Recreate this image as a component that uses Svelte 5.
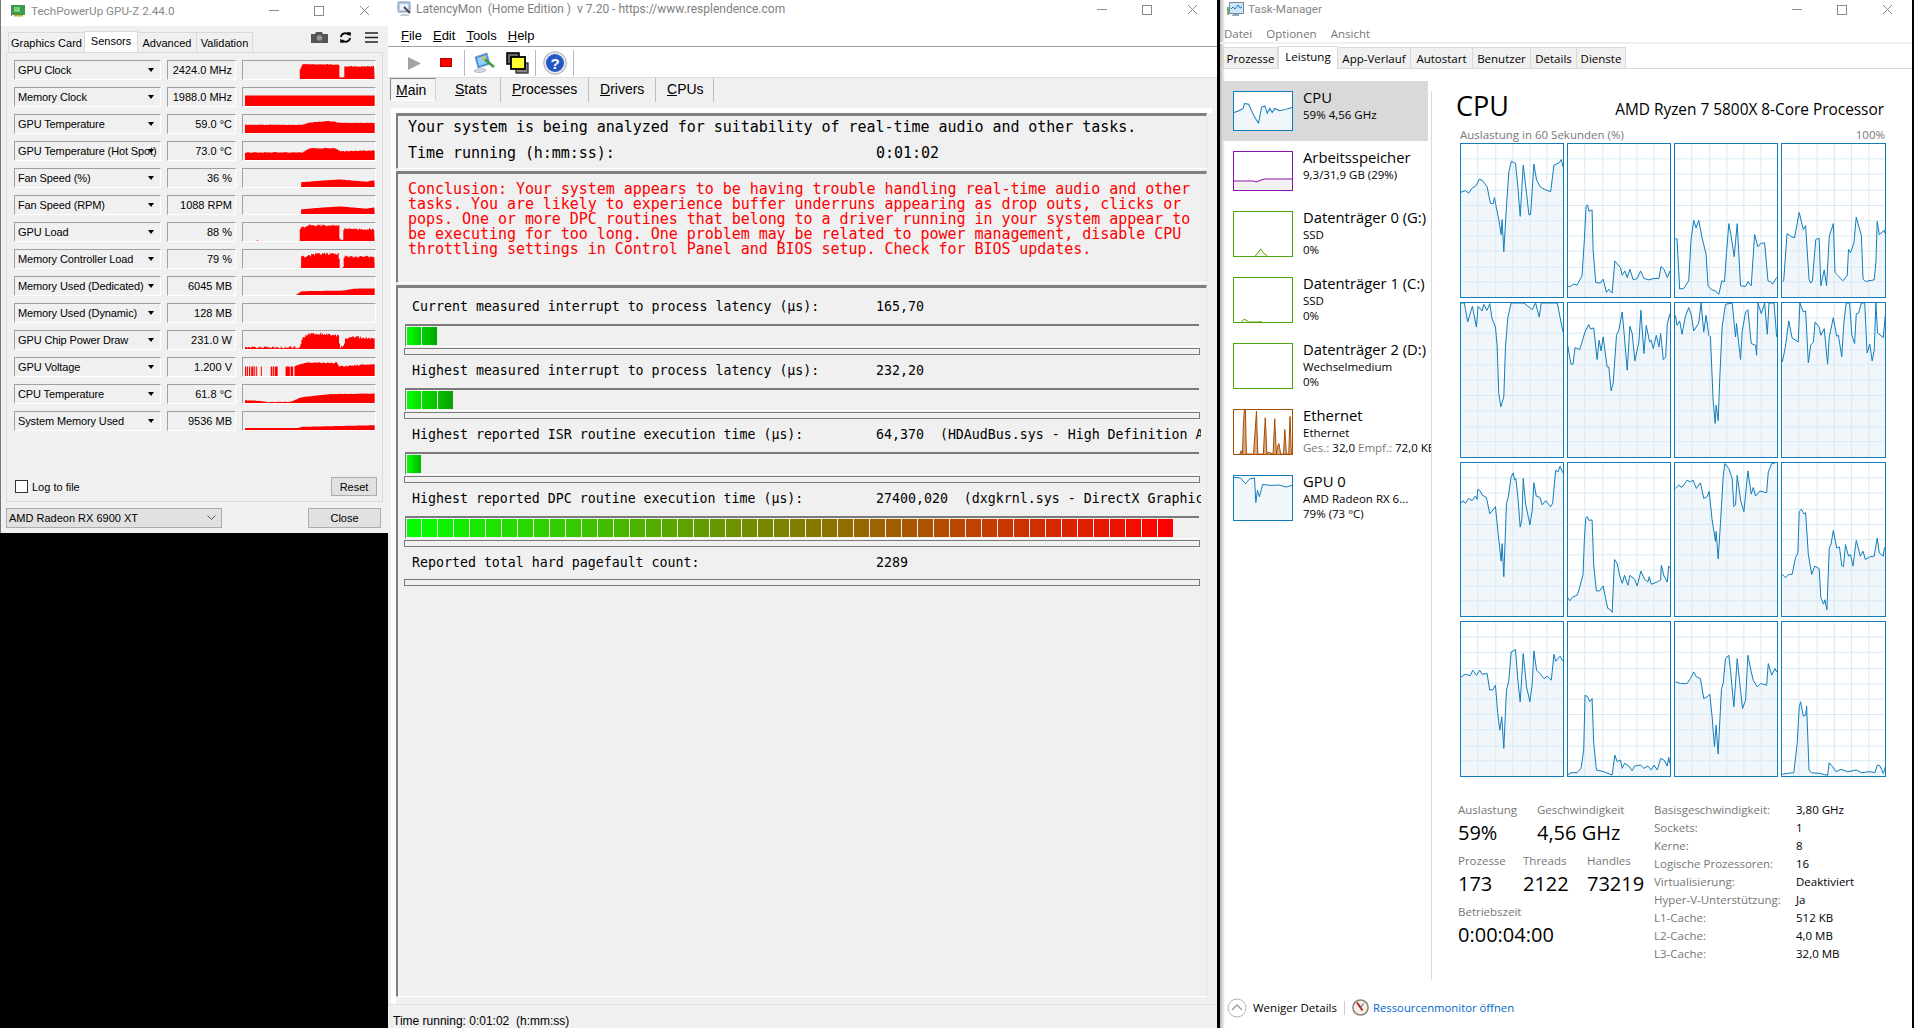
<script>
  const jitter = (i, seed) => {
    const v = Math.sin(i * 12.9898 + seed * 78.233) * 43758.5453;
    return v - Math.floor(v) - 0.5;
  };

  // Builds a stepped area for a GPU-Z sensor graph. Coordinates are in a 400x57 box.
  function area(spec, j, seed) {
    if (!spec.length) return '';
    const pts = [];
    const x0 = spec[0][0];
    pts.push(`${x0},57`);
    let k = 0;
    for (let x = x0; x <= spec[spec.length - 1][0]; x += 3) {
      while (k < spec.length - 2 && x > spec[k + 1][0]) k++;
      const [ax, ah] = spec[k];
      const [bx, bh] = spec[k + 1];
      const t = Math.min(1, (x - ax) / (bx - ax || 1));
      const h = Math.max(0, Math.min(57, ah + (bh - ah) * t + jitter(x, seed) * j));
      pts.push(`${x},${57 - h}`, `${x + 3},${57 - h}`);
    }
    pts.push(`${spec[spec.length - 1][0] + 3},57`);
    return pts.join(' ');
  }

  const sensors = [
    { n: 'GPU Clock', v: '2424.0 MHz', s: [[898, 32], [905, 47], [1015, 46], [1018, 6], [1030, 6], [1033, 40], [1122, 40]], j: 3 },
    { n: 'Memory Clock', v: '1988.0 MHz', s: [[732, 33], [1122, 33]], j: 0 },
    { n: 'GPU Temperature', v: '59.0 °C', s: [[732, 26], [905, 26], [925, 33], [985, 38], [1020, 32], [1122, 32]], j: 1.5 },
    { n: 'GPU Temperature (Hot Spot)', v: '73.0 °C', s: [[732, 24], [905, 24], [925, 37], [1000, 38], [1020, 28], [1122, 30]], j: 2.5 },
    { n: 'Fan Speed (%)', v: '36 %', s: [[902, 15], [960, 20], [1020, 24], [1060, 20], [1100, 17], [1122, 21]], j: 0.6 },
    { n: 'Fan Speed (RPM)', v: '1088 RPM', s: [[902, 15], [960, 20], [1020, 24], [1060, 20], [1100, 17], [1122, 21]], j: 0.6 },
    { n: 'GPU Load', v: '88 %', s: [[898, 40], [925, 50], [1015, 48], [1018, 6], [1028, 6], [1030, 38], [1122, 38]], j: 6, dot: 768 },
    { n: 'Memory Controller Load', v: '79 %', s: [[902, 34], [950, 45], [1015, 45], [1018, 0], [1028, 0], [1030, 35], [1122, 35]], j: 7 },
    { n: 'Memory Used (Dedicated)', v: '6045 MB', s: [[888, 2], [902, 12], [1030, 14], [1060, 20], [1122, 21]], j: 0 },
    { n: 'Memory Used (Dynamic)', v: '128 MB', s: [], j: 0 },
    { n: 'GPU Chip Power Draw', v: '231.0 W', s: [[732, 5], [898, 5], [905, 36], [925, 48], [960, 48], [1015, 42], [1018, 5], [1030, 8], [1035, 30], [1060, 38], [1122, 33]], j: 7 },
    { n: 'GPU Voltage', v: '1.200 V', s: [[882, 32], [910, 42], [1010, 42], [1015, 30], [1122, 38]], j: 3.5,
      bars: [[732, 3], [737, 4], [744, 4], [751, 7], [760, 3], [766, 3], [780, 3], [810, 5], [817, 3], [822, 9], [855, 13], [870, 8]] },
    { n: 'CPU Temperature', v: '61.8 °C', s: [[732, 8], [760, 8], [800, 3], [870, 4], [900, 18], [950, 24], [990, 28], [1122, 30]], j: 1.2 },
    { n: 'System Memory Used', v: '9536 MB', s: [[732, 6], [888, 6], [905, 10], [1030, 13], [1122, 15]], j: 0 }
  ].map((r, i) => ({ ...r, poly: area(r.s, r.j, i + 1) }));

  const conclusion = [
    'Conclusion: Your system appears to be having trouble handling real-time audio and other',
    'tasks. You are likely to experience buffer underruns appearing as drop outs, clicks or',
    'pops. One or more DPC routines that belong to a driver running in your system appear to',
    'be executing for too long. One problem may be related to power management, disable CPU',
    'throttling settings in Control Panel and BIOS setup. Check for BIOS updates.'
  ];

  const lerp = (a, b, t) => Math.round(a + (b - a) * t);
  function segs(n, from, to) {
    const out = [];
    for (let i = 0; i < n; i++) {
      const a = i / n, b = (i + 1) / n;
      const c1 = from.map((v, k) => lerp(v, to[k], a));
      const c2 = from.map((v, k) => lerp(v, to[k], b));
      out.push(`linear-gradient(90deg, rgb(${c1}), rgb(${c2}))`);
    }
    return out;
  }

  const rows = [
    { l: 'Current measured interrupt to process latency (µs):', v: '165,70', seg: segs(2, [0, 255, 0], [0, 165, 0]) },
    { l: 'Highest measured interrupt to process latency (µs):', v: '232,20', seg: segs(3, [0, 255, 0], [10, 160, 0]) },
    { l: 'Highest reported ISR routine execution time (µs):', v: '64,370  (HDAudBus.sys - High Definition A', seg: segs(1, [0, 255, 0], [0, 185, 0]) },
    { l: 'Highest reported DPC routine execution time (µs):', v: '27400,020  (dxgkrnl.sys - DirectX Graphic', seg: segs(48, [0, 255, 0], [255, 0, 0]) },
    { l: 'Reported total hard pagefault count:', v: '2289', seg: null }
  ];

  const tmTabs = ['Prozesse', 'Leistung', 'App-Verlauf', 'Autostart', 'Benutzer', 'Details', 'Dienste'];

  const side = [
    { n: 'CPU', sub: ['59%  4,56 GHz'], col: 'blue', vb: '40 274 178 118', h: 40, sel: true,
      p: '40,338 55,332 68,325 72,310 85,312 95,335 105,355 115,370 125,320 135,318 142,340 150,325 157,338 165,325 180,332 200,328 218,322', base: 392 },
    { n: 'Arbeitsspeicher', sub: ['9,3/31,9 GB (29%)'], col: 'purple', vb: '40 454 178 118', h: 40,
      p: '40,544 100,544 108,547 125,540 135,538 218,538', base: 572 },
    { n: 'Datenträger 0 (G:)', sub: ['SSD', '0%'], col: 'green', vb: '40 634 178 136', h: 45,
      p: '105,770 112,762 122,748 130,760 140,768 142,770', base: 770 },
    { n: 'Datenträger 1 (C:)', sub: ['SSD', '0%'], col: 'green', vb: '40 -39 178 136', h: 45,
      p: '62,97 70,89 80,92 84,97 120,97 122,94 124,97', base: 97 },
    { n: 'Datenträger 2 (D:)', sub: ['Wechselmedium', '0%'], col: 'green', vb: '40 358 178 136', h: 45, p: '', base: 494 },
    { n: 'Ethernet', sub: ['Ethernet'], eth: true, col: 'orange', vb: '40 358 178 136', h: 45,
      p: '58,494 62,484 66,494 69,400 72,358 75,358 78,494 100,494 105,420 109,362 113,494 130,494 136,382 141,494 145,488 160,494 165,385 170,494 174,470 178,462 183,494 192,494 196,418 201,494 208,494 212,378 216,494', base: 494 },
    { n: 'GPU 0', sub: ['AMD Radeon RX 6...', '79%  (73 °C)'], col: 'blue', vb: '40 556 178 136', h: 45,
      p: '40,560 60,562 75,580 88,565 103,562 107,638 112,600 118,620 128,582 150,585 180,584 200,590 218,585', base: 692 }
  ];

  const vx = [51, 105, 156, 207, 258];
  const hy = [46, 92, 141, 187, 233, 279, 325, 374, 418];

  // Polylines in the 3x coordinates of the crops: [left, top, text of points]
  const cores = [
    [61, 430, '62,577 75,572 85,580 95,565 108,556 116,538 125,540 140,560 150,610 158,612 162,593 168,625 175,660 182,705 185,660 190,757 198,620 205,515 213,483 225,490 232,560 239,650 248,495 258,580 265,645 270,645 280,492 288,540 300,562 315,570 330,575 340,495 355,488 362,478 367,500'],
    [382, 430, '382,860 388,863 400,855 410,858 425,830 432,720 437,620 441,615 446,635 455,630 458,750 466,850 480,852 488,840 498,880 505,870 515,882 523,785 540,805 545,828 553,815 560,835 568,810 578,842 590,838 600,815 610,838 625,842 640,838 655,838 661,802 670,810 680,835 688,815'],
    [703, 430, '705,718 710,718 718,870 730,868 745,845 752,720 760,662 767,685 775,662 785,715 797,765 803,862 815,872 825,876 835,886 844,845 852,848 858,760 865,672 872,710 881,772 890,672 900,860 915,862 922,848 932,860 942,705 952,742 960,732 972,730 982,845 990,848 996,855 1008,835'],
    [1024, 430, '1026,848 1030,845 1040,702 1050,710 1062,715 1076,638 1088,690 1095,678 1105,840 1110,852 1115,845 1125,720 1135,716 1140,860 1150,812 1157,860 1165,710 1177,672 1182,820 1190,828 1205,845 1218,830 1222,750 1228,760 1238,730 1245,652 1260,708 1265,840 1272,847 1298,842 1303,790 1307,665 1313,705 1328,692 1333,710'],

    [61, 37, '62,38 72,38 82,95 96,48 108,110 113,48 125,62 130,42 140,60 148,40 155,85 165,110 170,165 175,310 181,350 190,320 195,170 202,82 212,38 250,38 275,58 285,38 296,80 302,38 350,38 358,80 367,125'],
    [382, 37, '382,165 392,222 398,222 404,172 418,178 428,145 435,122 445,103 450,116 460,113 470,208 476,150 482,182 488,140 500,230 505,230 512,302 518,280 528,135 535,120 545,65 550,120 560,240 568,108 575,130 583,212 595,155 601,60 610,190 617,105 627,155 632,150 638,175 647,135 655,170 660,130 668,208 675,200 680,100 688,70'],
    [703, 37, '705,75 710,105 718,92 725,132 735,78 745,52 752,70 760,122 775,98 782,38 790,125 797,75 805,135 810,140 818,330 824,400 827,345 833,392 838,260 845,110 855,42 875,38 885,140 888,100 900,208 905,122 915,65 922,58 932,160 945,165 948,195 952,38 962,70 972,38 980,132 985,38 1000,38 1008,140'],
    [1024, 37, '1026,215 1035,170 1045,92 1055,143 1073,155 1078,38 1088,65 1095,62 1103,218 1110,165 1118,155 1123,95 1135,110 1140,135 1150,115 1160,222 1165,140 1177,82 1187,138 1192,135 1202,200 1208,100 1215,38 1225,38 1232,135 1240,160 1245,70 1252,68 1260,38 1270,38 1277,188 1285,162 1292,212 1298,180 1303,38 1308,128 1325,142 1333,50'],

    [61, 517, '62,640 68,632 75,640 85,625 95,632 105,618 110,628 112,598 120,603 125,615 138,622 148,672 158,660 165,650 173,730 182,815 185,762 190,862 198,640 203,622 212,560 218,548 222,570 226,565 232,620 239,712 244,690 248,565 255,640 268,705 275,660 280,578 287,618 298,622 305,645 315,632 330,650 336,640 345,540 352,545 358,528 367,548'],
    [382, 517, '382,925 388,935 395,925 410,918 415,905 428,855 432,750 436,685 440,680 446,692 455,690 460,830 468,905 478,905 488,890 495,925 502,958 510,962 515,970 522,810 530,822 538,860 545,882 552,858 562,888 568,858 582,870 590,890 601,845 612,870 622,878 626,862 632,885 650,878 660,872 662,828 670,860 680,878 684,830 688,835'],
    [703, 517, '705,595 715,585 725,592 740,570 750,575 758,570 768,595 780,578 790,625 800,620 806,604 815,690 825,755 827,725 833,808 840,700 848,560 853,520 865,535 875,565 880,650 885,645 890,555 900,630 910,665 922,542 932,612 938,592 945,618 958,603 978,608 983,545 993,520 1008,516'],
    [1024, 517, '1026,855 1035,865 1045,855 1055,855 1065,805 1072,790 1076,665 1082,658 1090,672 1095,668 1103,795 1113,855 1122,830 1135,838 1140,925 1148,945 1152,932 1158,962 1165,775 1170,765 1177,722 1187,775 1195,772 1202,828 1207,832 1213,765 1222,800 1228,795 1235,830 1245,752 1257,800 1265,785 1272,810 1285,802 1298,800 1307,745 1313,790 1325,800 1328,775 1333,775'],

    [61, 64, '62,230 75,222 90,226 97,210 108,225 118,210 125,222 140,220 148,270 158,268 165,255 172,340 178,390 184,350 190,445 198,270 205,240 212,155 225,148 232,240 239,305 248,160 258,260 268,305 275,250 280,152 288,210 300,222 310,235 320,228 332,240 340,162 345,183 358,168 367,182'],
    [382, 64, '382,525 392,518 410,518 422,505 430,450 434,285 442,290 448,305 455,295 460,430 468,510 490,515 515,525 523,465 530,485 540,480 545,505 552,490 565,498 575,512 582,498 600,495 610,505 622,498 632,510 640,495 650,510 660,475 670,480 680,498 684,472 688,490'],
    [703, 64, '705,245 720,250 740,250 750,235 760,215 768,230 780,235 790,295 800,290 808,282 815,350 822,440 827,375 833,462 843,265 848,250 855,175 865,165 870,210 880,320 890,175 900,270 906,325 915,300 922,165 932,215 938,240 950,260 960,250 978,255 983,190 993,225 1003,205 1008,215'],
    [1024, 64, '1026,523 1040,520 1060,518 1070,430 1076,320 1080,305 1088,348 1095,345 1098,318 1105,510 1112,518 1135,520 1160,526 1165,488 1175,500 1185,515 1200,508 1220,515 1245,510 1260,518 1285,515 1300,518 1307,495 1315,497 1325,520 1333,495']
  ].map(([x, y, pts]) => {
    const first = pts.split(' ')[0].split(',')[0];
    const last = pts.split(' ').pop().split(',')[0];
    return { x, y, pts, fill: `${first},${y + 465} ${pts} ${last},${y + 465}` };
  });

  const specs = [
    ['Basisgeschwindigkeit:', '3,80 GHz'], ['Sockets:', '1'], ['Kerne:', '8'],
    ['Logische Prozessoren:', '16'], ['Virtualisierung:', 'Deaktiviert'], ['Hyper-V-Unterstützung:', 'Ja'],
    ['L1-Cache:', '512 KB'], ['L2-Cache:', '4,0 MB'], ['L3-Cache:', '32,0 MB']
  ];
</script>

{#snippet controls()}
  <div class="controls">
    <svg width="101" height="11" viewBox="0 0 101 11">
      <path d="M0 5.5h10" class="ctl" />
      <rect x="45.5" y="1.5" width="9" height="9" class="ctl" />
      <path d="M91 1l9 9M100 1l-9 9" class="ctl" />
    </svg>
  </div>
{/snippet}

<div class="desktop">
  <!-- GPU-Z -->
  <section class="gz">
    <header class="gz-title">
      <svg class="gz-ico" width="15" height="13" viewBox="0 0 15 13">
        <rect x="1" y="1" width="13" height="10" fill="#3c9a4a" />
        <rect x="3" y="3" width="6" height="5" fill="#7ad07a" />
        <rect x="0" y="1" width="1" height="11" fill="#777" />
        <rect x="3" y="11" width="9" height="1.5" fill="#c8a93a" />
      </svg>
      <span class="gz-name">TechPowerUp GPU-Z 2.44.0</span>
      {@render controls()}
    </header>
    <div class="gz-tabs">
      <span class="gz-tab w77">Graphics Card</span>
      <span class="gz-tab gz-on w53">Sensors</span>
      <span class="gz-tab w59">Advanced</span>
      <span class="gz-tab w56">Validation</span>
      <div class="gz-tools">
        <svg width="17" height="11" viewBox="0 0 17 11">
          <path d="M0 2h4l1-2h6l1 2h5v9H0z" fill="#555" />
          <circle cx="8.5" cy="6" r="2.7" fill="#999" />
        </svg>
        <svg width="13" height="11" viewBox="0 0 13 11" fill="none" stroke="#000" stroke-width="1.8">
          <path d="M2 5a4.4 4 0 0 1 8-2" />
          <path d="M11 6a4.4 4 0 0 1-8 2" />
          <path d="M8 0l4 .5-.5 4zM5 11l-4-.5.5-4z" fill="#000" stroke="none" />
        </svg>
        <svg width="13" height="11" viewBox="0 0 13 11">
          <path d="M0 1h13M0 5.5h13M0 10h13" stroke="#222" stroke-width="1.7" />
        </svg>
      </div>
    </div>
    <div class="gz-panel">
      <div class="gz-rows">
        {#each sensors as r}
          <div class="sunk gz-label">
            <span>{r.n}</span>
            <i class="arrow"></i>
          </div>
          <div class="sunk gz-val">{r.v}</div>
          <div class="sunk gz-graph">
            <svg viewBox="726 0 400 57" preserveAspectRatio="none" width="132" height="18">
              {#if r.poly}<polygon points={r.poly} fill="#ff0000" />{/if}
              {#if r.bars}{#each r.bars as b}<rect x={b[0]} y="27" width={b[1]} height="30" fill="#ff0000" />{/each}{/if}
              {#if r.dot}<rect x={r.dot} y="54" width="3" height="3" fill="#ff0000" />{/if}
            </svg>
          </div>
        {/each}
      </div>
      <div class="gz-foot">
        <label class="gz-check"><i class="box"></i>Log to file</label>
        <span class="btn reset">Reset</span>
      </div>
    </div>
    <div class="gz-bottom">
      <div class="combo">
        <span>AMD Radeon RX 6900 XT</span>
        <svg width="9" height="6" viewBox="0 0 9 6"><path d="M.5 .5l4 4 4-4" fill="none" stroke="#555" /></svg>
      </div>
      <span class="btn close">Close</span>
    </div>
  </section>

  <!-- LatencyMon -->
  <section class="lm">
    <header class="lm-title">
      <svg width="16" height="16" viewBox="0 0 16 16">
        <rect x="1" y="1" width="12" height="10" rx="1" fill="#b9cfe9" stroke="#7f93ad" />
        <rect x="3" y="3" width="8" height="6" fill="#eaf2fb" />
        <path d="M4 13h8v2H3z" fill="#c8ced6" />
        <path d="M7 6l6 6" stroke="#444" stroke-width="2" />
      </svg>
      <span class="lm-name">LatencyMon&nbsp; (Home Edition )&nbsp; v 7.20 - https://www.resplendence.com</span>
      {@render controls()}
    </header>
    <nav class="lm-menu">
      <span><u>F</u>ile</span><span><u>E</u>dit</span><span><u>T</u>ools</span><span><u>H</u>elp</span>
    </nav>
    <div class="lm-tools">
      <svg class="t-play" width="13" height="13" viewBox="0 0 13 13"><path d="M0 0l13 6.5L0 13z" fill="#a3a3a3" /></svg>
      <i class="t-stop"></i>
      <i class="t-sep sep1"></i>
      <svg class="t-mon" width="24" height="22" viewBox="0 0 24 22">
        <path d="M2 5l12-4 3 11-12 4z" fill="#3f80d8" stroke="#8aa6c9" />
        <path d="M4 6l9-3 2 8-9 3z" fill="#8fd0ff" />
        <path d="M1 19c3-3 10-3 12-1 1 2-10 4-12 1z" fill="#d5d8de" stroke="#9aa2ad" stroke-width=".6" />
        <path d="M9 5l12 10" stroke="#3c9a3c" stroke-width="2.4" />
        <path d="M9 5l3 2.4" stroke="#e8c23a" stroke-width="2.6" />
      </svg>
      <svg class="t-win" width="23" height="22" viewBox="0 0 23 22">
        <rect x="1" y="1" width="12" height="11" fill="#666" stroke="#000" stroke-width="1.6" />
        <rect x="10" y="11" width="12" height="10" fill="#888" stroke="#333" stroke-width="1.4" />
        <rect x="5" y="5" width="14" height="12" fill="#ffff33" stroke="#000" stroke-width="1.8" />
      </svg>
      <i class="t-sep sep2"></i>
      <svg class="t-help" width="24" height="24" viewBox="0 0 24 24">
        <circle cx="12" cy="12" r="11.3" fill="#e5e8ee" stroke="#a8adb5" />
        <circle cx="12" cy="12" r="9" fill="#2458c4" />
        <text x="12" y="17.5" text-anchor="middle" class="help-q">?</text>
      </svg>
      <i class="t-sep sep3"></i>
    </div>
    <div class="lm-tabs">
      <span class="lm-tab lm-on"><u>M</u>ain</span>
      <span class="lm-tab w57"><u>S</u>tats</span>
      <span class="lm-tab w88"><u>P</u>rocesses</span>
      <span class="lm-tab w67"><u>D</u>rivers</span>
      <span class="lm-tab w58"><u>C</u>PUs</span>
    </div>
    <div class="lm-body">
      <div class="stage">
        <div class="panel p1">
          <div class="big">Your system is being analyzed for suitability of real-time audio and other tasks.</div>
          <div class="big time"><span class="time-l">Time running (h:mm:ss):</span><span>0:01:02</span></div>
        </div>
        <div class="panel p2">
          {#each conclusion as line}<div class="red">{line}</div>{/each}
        </div>
        <div class="panel p3">
          {#each rows as r}
            <div class="row">
              <div class="rtext"><span class="rlabel">{r.l}</span><span class="rval">{r.v}</span></div>
              {#if r.seg}
                <div class="bar">
                  {#each r.seg as g}<i class="seg" style:background={g}></i>{/each}
                </div>
              {/if}
              <div class="thin" class:nobar={!r.seg}></div>
            </div>
          {/each}
        </div>
      </div>
    </div>
    <footer class="lm-status">Time running: 0:01:02&nbsp; (h:mm:ss)</footer>
  </section>

  <!-- Task-Manager -->
  <section class="tm">
    <header class="tm-title">
      <svg width="17" height="15" viewBox="0 0 17 15">
        <rect x="2.5" y=".5" width="14" height="11" fill="#cfe6f7" stroke="#6f8aa0" />
        <path d="M4 7l2-2 2 2 3-4 2 3 2-1" fill="none" stroke="#1f78c1" />
        <path d="M0 5h2v8H0z" fill="#6db36d" />
        <path d="M6 12h6v2H5z" fill="#9aa5ae" />
      </svg>
      <span class="tm-name">Task-Manager</span>
      {@render controls()}
    </header>
    <nav class="tm-menu"><span>Datei</span><span>Optionen</span><span>Ansicht</span></nav>
    <div class="tm-tabs">
      {#each tmTabs as t, i}<span class="tm-tab t{i}" class:tm-on={i === 1}>{t}</span>{/each}
    </div>
    <div class="tm-body">
      <aside class="tm-side">
        {#each side as s}
          <div class="item" class:sel={s.sel} class:tall={s.h === 45}>
            <div class="thumb {s.col}" class:tallth={s.h === 45}>
              {#if s.p}
                <svg viewBox={s.vb} preserveAspectRatio="none">
                  <polygon points="{s.p.split(' ')[0].split(',')[0]},{s.base} {s.p} {s.p.split(' ').pop().split(',')[0]},{s.base}" class="tf" />
                  <polyline points={s.p} class="tl" />
                </svg>
              {/if}
            </div>
            <div class="itxt">
              <div class="iname">{s.n}</div>
              {#each s.sub as x}<div class="isub">{x}</div>{/each}
              {#if s.eth}<div class="isub nowrap"><span class="grey">Ges.:</span> 32,0 <span class="grey">Empf.:</span> 72,0 KB</div>{/if}
            </div>
          </div>
        {/each}
      </aside>
      <main class="tm-main">
        <div class="m-head"><span class="m-cpu">CPU</span><span class="m-model">AMD Ryzen 7 5800X 8-Core Processor</span></div>
        <div class="m-sub"><span>Auslastung in 60 Sekunden (%)</span><span>100%</span></div>
        <div class="cores">
          {#each cores as c}
            <div class="core">
              <svg viewBox="{c.x + 1} {c.y + 1} 305 463" preserveAspectRatio="none">
                <polygon points={c.fill} class="cf" />
                {#each vx as v}<line x1={c.x + v} x2={c.x + v} y1={c.y} y2={c.y + 465} class="cg" />{/each}
                {#each hy as h}<line x1={c.x} x2={c.x + 307} y1={c.y + h} y2={c.y + h} class="cg" />{/each}
                <polyline points={c.pts} class="cl" />
              </svg>
            </div>
          {/each}
        </div>
        <div class="stats">
          <div class="s-left">
            <div class="s-line gap0">
              <div class="st w79"><div class="sl">Auslastung</div><div class="sv">59%</div></div>
              <div class="st"><div class="sl">Geschwindigkeit</div><div class="sv">4,56 GHz</div></div>
            </div>
            <div class="s-line">
              <div class="st w65"><div class="sl">Prozesse</div><div class="sv">173</div></div>
              <div class="st w64"><div class="sl">Threads</div><div class="sv">2122</div></div>
              <div class="st"><div class="sl">Handles</div><div class="sv">73219</div></div>
            </div>
            <div class="s-line">
              <div class="st"><div class="sl">Betriebszeit</div><div class="sv">0:00:04:00</div></div>
            </div>
          </div>
          <div class="s-right">
            {#each specs as sp}<span class="sk">{sp[0]}</span><span class="sx">{sp[1]}</span>{/each}
          </div>
        </div>
      </main>
    </div>
    <footer class="tm-foot">
      <svg width="20" height="20" viewBox="0 0 20 20" fill="none" stroke="#9a9a9a">
        <circle cx="10" cy="10" r="9" stroke="#b5b5b5" />
        <path d="M5 12l5-5 5 5" stroke-width="1.3" />
      </svg>
      <span class="less">Weniger Details</span>
      <i class="f-sep"></i>
      <svg width="17" height="17" viewBox="0 0 17 17">
        <circle cx="8.5" cy="8.5" r="7.6" fill="#f3efe9" stroke="#8d8378" stroke-width="1.5" />
        <path d="M5 3.5l5.5 8" stroke="#b02a2a" stroke-width="2" />
        <path d="M8.5 8.5l3-4" stroke="#555" />
      </svg>
      <span class="link">Ressourcenmonitor öffnen</span>
    </footer>
  </section>
</div>

<style>
  :global(body) { margin: 0; background: #000; }
  * { box-sizing: border-box; }
  i { display: block; font-style: normal; }
  .desktop { display: flex; align-items: flex-start; width: 1914px; height: 1028px; background: #000; overflow: hidden; font-family: "Liberation Sans", Arial, sans-serif; color: #000; }

  .controls { margin-left: auto; flex: none; line-height: 0; }
  .ctl { fill: none; stroke: #8b8b8b; stroke-width: 1; }

  /* GPU-Z */
  .gz { width: 388px; height: 533px; border-left: 1px solid #777; background: #f0f0f0; flex: none; display: flex; flex-direction: column; font-size: 11px; }
  .gz-title { height: 26px; background: #fff; display: flex; align-items: center; padding: 0 18px 5px 10px; }
  .gz-title svg.gz-ico { margin-right: 5px; }
  .gz-name { color: #8a8a8a; font-family: Roboto, sans-serif; font-size: 11.7px; white-space: nowrap; }
  .gz-tabs { height: 26px; display: flex; align-items: flex-end; padding-left: 7px; }
  .gz-tab { height: 20px; border: 1px solid #d9d9d9; border-bottom: 0; margin-right: -1px; display: flex; align-items: center; justify-content: center; white-space: nowrap; }
  .gz-on { height: 21px; background: #fff; padding-bottom: 3px; position: relative; z-index: 1; }
  .w77 { width: 77px; } .w53 { width: 54px; } .w59 { width: 60px; } .w56 { width: 57px; }
  .gz-tools { margin-left: auto; margin-right: 10px; margin-bottom: 9px; display: flex; gap: 11px; align-items: center; }
  .gz-tools svg:last-child { margin-left: 2px; }
  .gz-panel { margin: 0 5px; height: 450px; border: 1px solid #d9d9d9; padding: 7px 5px 5px 7px; display: flex; flex-direction: column; }
  .gz-rows { display: grid; grid-template-columns: 147px 69px 134px; grid-auto-rows: 20px; column-gap: 6px; row-gap: 7px; }
  .sunk { border: 1px solid; border-color: #a0a0a0 #fff #fff #a0a0a0; }
  .gz-label { display: flex; align-items: center; padding-left: 3px; position: relative; white-space: nowrap; letter-spacing: -.12px; }
  .arrow { position: absolute; right: 6px; top: 7px; width: 0; height: 0; border: 3.5px solid transparent; border-top: 4px solid #000; border-bottom: 0; }
  .gz-val { display: flex; align-items: center; justify-content: flex-end; padding-right: 3px; white-space: nowrap; }
  .gz-graph { display: block; line-height: 0; }
  .gz-foot { margin-top: auto; display: flex; justify-content: space-between; align-items: center; }
  .gz-check { display: flex; align-items: center; gap: 4px; margin-left: 1px; }
  .box { width: 13px; height: 13px; background: #fff; border: 1px solid #333; }
  .btn { display: flex; align-items: center; justify-content: center; background: #e1e1e1; border: 1px solid #adadad; }
  .reset { width: 46px; height: 19px; }
  .gz-bottom { margin-top: 6px; padding-left: 5px; display: flex; justify-content: space-between; padding-right: 7px; }
  .combo { width: 216px; height: 20px; background: #e1e1e1; border: 1px solid #adadad; display: flex; align-items: center; justify-content: space-between; padding: 0 5px 0 2px; font-size: 11px; }
  .close { width: 73px; height: 20px; }

  /* LatencyMon */
  .lm { width: 829px; height: 1028px; background: #f0f0f0; flex: none; display: flex; flex-direction: column; }
  .lm-title { height: 24px; background: #fff; display: flex; align-items: center; padding: 0 19px 6px 9px; }
  .lm-name { margin-left: 3px; color: #808080; font-family: Roboto, sans-serif; font-size: 12px; white-space: nowrap; }
  .lm-menu { height: 23px; background: #fff; border-bottom: 1px solid #a0a0a0; display: flex; align-items: center; padding-left: 13px; gap: 11px; font-size: 13px; }
  .lm-tools { height: 31px; background: #fff; border-bottom: 1px solid #dcdcdc; display: flex; align-items: center; padding: 2px 0 0 20px; }
  .t-play { flex: none; }
  .t-stop { width: 12px; height: 9px; background: #f00; border: 1px solid #b00; margin-left: 19px; margin-top: -1px; }
  .t-sep { width: 1px; height: 26px; background: #b8b8b8; box-shadow: 1px 0 0 #fff; }
  .sep1 { margin-left: 12px; }
  .t-mon { margin-left: 8px; }
  .t-win { margin-left: 9px; }
  .sep2 { margin-left: 6px; }
  .t-help { margin-left: 7px; }
  .sep3 { margin-left: 6px; }
  .help-q { fill: #fff; font: bold 15px "Liberation Sans", sans-serif; }
  .lm-tabs { height: 25px; display: flex; align-items: stretch; padding: 0 0 1px 2px; font-size: 14px; }
  .lm-tab { display: flex; align-items: center; padding-left: 11px; border-right: 1px solid #bdbdbd; padding-bottom: 2px; }
  .lm-on { width: 46px; height: 23px; padding-left: 5px; padding-bottom: 0; border: 1px solid; border-color: #8a8a8a #fff #fff #8a8a8a; background: #f4f4f4; margin-right: 8px; border-right: 1px solid #cfcfcf; }
  .w57 { width: 57px; } .w88 { width: 88px; } .w67 { width: 67px; } .w58 { width: 58px; }
  .lm-body { flex: 1; padding: 5px 5px 0 3px; min-height: 0; }
  .stage { height: 100%; border-left: 5px solid #fff; border-top: 5px solid #fff; display: flex; flex-direction: column; gap: 2px; padding-bottom: 7px; width: 821px; }
  .panel { width: 811px; background: #f0f0f0; border-style: solid; border-color: #808080 #e6e6e6 #fff #808080; border-width: 3px 1px 1px 2px; }
  .p1 { height: 56px; }
  .p2 { height: 112px; padding-top: 8px; padding-left: 10px; }
  .p3 { flex: 1; padding-top: 9px; }
  .big, .red { font-family: "DejaVu Sans Mono", monospace; font-size: 15px; letter-spacing: -.04px; white-space: pre; }
  .big { line-height: 22px; padding-left: 10px; }
  .time { margin-top: 4px; display: flex; }
  .time-l { width: 468px; }
  .red { color: #f00; line-height: 15px; }
  .row { height: 64px; overflow: hidden; }
  .rtext { display: flex; height: 20px; line-height: 20px; font-family: "DejaVu Sans Mono", monospace; font-size: 13.28px; white-space: pre; padding-left: 14px; }
  .rlabel { width: 464px; flex: none; }
  .rval { width: 325px; overflow: hidden; }
  .bar { margin: 7px 0 0 7px; width: 794px; height: 23px; border-top: 2px solid #7a7a7a; border-left: 1px solid #7a7a7a; border-bottom: 1px solid #fff; display: flex; padding: 1px 0 0 1px; gap: 1px; background: #f0f0f0; }
  .seg { width: 15px; height: 18px; flex: none; }
  .seg:first-child { width: 14px; }
  .thin { margin: 1px 0 0 6px; width: 796px; height: 7px; border: 1px solid #7a7a7a; background: #f0f0f0; }
  .nobar { margin-top: 6px; }
  .lm-status { height: 24px; background: #f0f0f0; border-top: 1px solid #e0e0e0; padding: 9px 0 0 5px; font-size: 12px; white-space: nowrap; }

  /* Task manager */
  .tm { margin-left: 3px; width: 692px; height: 1028px; flex: none; background: linear-gradient(90deg, #b5b5b5, #fff 5px); display: flex; flex-direction: column; font-family: "Open Sans", sans-serif; font-size: 11.5px; }
  .tm-title { height: 24px; display: flex; align-items: center; padding: 0 19px 6px 7px; }
  .tm-name { margin-left: 4px; color: #888; font-family: Roboto, sans-serif; font-size: 11.7px; }
  .tm-menu { height: 20px; border-bottom: 2px solid #f0f0f0; display: flex; gap: 14px; padding-left: 4px; align-items: center; color: #777; }
  .tm-tabs { margin-top: 2px; height: 23px; padding-left: 3px; display: flex; align-items: flex-end; border-bottom: 1px solid #d9d9d9; }
  .tm-tab { height: 21px; background: #f0f0f0; border: 1px solid #d9d9d9; border-bottom: 0; border-left: 0; display: flex; align-items: center; justify-content: center; white-space: nowrap; }
  .tm-on { height: 23px; background: #fff; padding-bottom: 3px; margin-bottom: -1px; border-left: 1px solid #d9d9d9; }
  .t0 { width: 55px; border-left: 1px solid #d9d9d9; } .t1 { width: 60px; } .t2 { width: 73px; } .t3 { width: 62px; } .t4 { width: 58px; } .t5 { width: 46px; } .t6 { width: 49px; }
  .tm-body { display: flex; height: 911px; }
  .tm-side { width: 212px; flex: none; padding-top: 12px; position: relative; }
  .tm-side::after { content: ""; position: absolute; right: 0; top: 22px; bottom: 0; width: 1px; background: #d9d9d9; }
  .item { height: 60px; margin-left: 3px; width: 205px; padding: 10px 0 0 10px; display: flex; gap: 10px; }
  .tall { height: 66px; }
  .sel { background: #d9d9d9; }
  .thumb { width: 60px; height: 40px; border: 1px solid; flex: none; background: #fff; line-height: 0; }
  .tallth { height: 46px; }
  .thumb svg { width: 100%; height: 100%; display: block; }
  .tl { fill: none; stroke-width: 1; vector-effect: non-scaling-stroke; }
  .blue { border-color: #117dbb; } .blue .tl { stroke: #117dbb; } .blue .tf { fill: #f1f6fa; }
  .purple { border-color: #8b12ae; } .purple .tl { stroke: #8b12ae; } .purple .tf { fill: #f4f2f4; }
  .green { border-color: #4da60c; } .green .tl { stroke: #4da60c; } .green .tf { fill: #eff7e8; }
  .orange { border-color: #a74f01; } .orange .tl { stroke: #a74f01; } .orange .tf { fill: #d9aa85; }
  .itxt { margin-top: -4px; white-space: nowrap; min-width: 0; }
  .iname { font-size: 14.8px; line-height: 20px; }
  .isub { font-size: 11.5px; line-height: 15px; }
  .nowrap { width: 128px; overflow: hidden; }
  .grey { color: #777; }
  .tm-main { flex: 1; padding-left: 24px; padding-top: 18px; }
  .m-head { width: 428px; display: flex; justify-content: space-between; align-items: flex-start; height: 37px; }
  .m-cpu { font-size: 27px; line-height: 37px; }
  .m-model { font-size: 15.4px; line-height: 20px; margin-top: 13px; }
  .m-sub { margin: 3px 0 0 4px; width: 425px; display: flex; justify-content: space-between; color: #777; line-height: 16px; }
  .cores { margin: 0 0 0 4px; display: grid; grid-template-columns: 104px 104px 104px 105px; grid-template-rows: 155px 156px 155px 156px; gap: 4px 3px; }
  .core { border: 1px solid #117dbb; line-height: 0; overflow: hidden; }
  .core svg { width: 100%; height: 100%; display: block; }
  .cf { fill: #f1f6fa; }
  .cg { stroke: #d9eaf4; stroke-width: 1; vector-effect: non-scaling-stroke; }
  .cl { fill: none; stroke: #117dbb; stroke-width: 1; vector-effect: non-scaling-stroke; stroke-linejoin: round; }
  .stats { display: flex; margin-top: 25px; padding-left: 2px; }
  .s-left { width: 196px; flex: none; }
  .s-line { display: flex; height: 51px; }
  .w79 { width: 79px; } .w65 { width: 65px; } .w64 { width: 64px; }
  .sl { color: #777; line-height: 16px; }
  .sv { font-size: 20px; line-height: 28px; margin-top: 1px; white-space: nowrap; }
  .s-right { display: grid; grid-template-columns: 142px auto; grid-auto-rows: 18px; line-height: 16px; }
  .sk { color: #777; white-space: nowrap; }
  .sx { white-space: nowrap; }
  .tm-foot { height: 48px; display: flex; align-items: center; padding-left: 7px; padding-top: 7px; }
  .less { margin-left: 6px; }
  .f-sep { width: 1px; height: 14px; background: #cfcfcf; margin: 0 7px; }
  .link { margin-left: 4px; color: #0066cc; font-size: 11.3px; }
</style>
